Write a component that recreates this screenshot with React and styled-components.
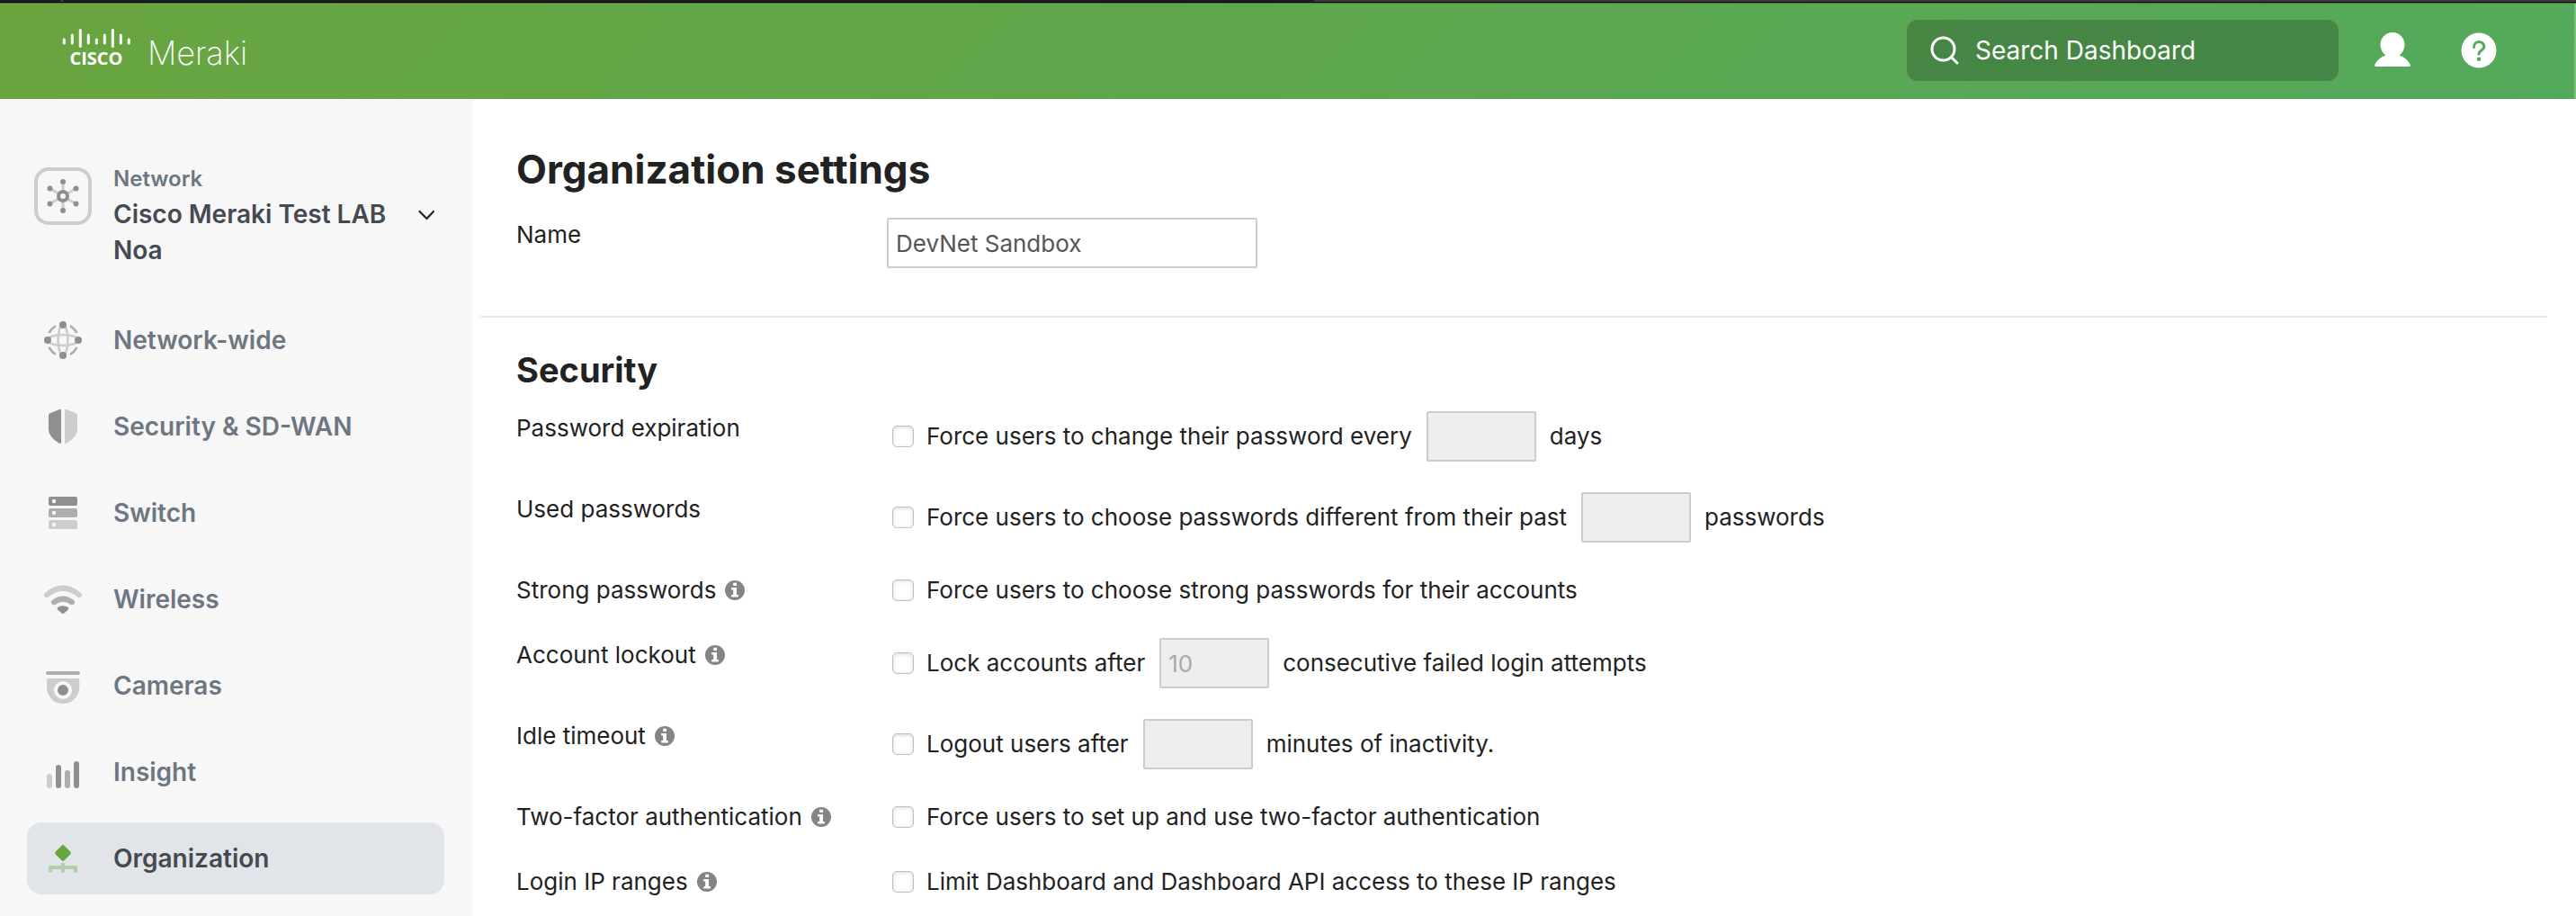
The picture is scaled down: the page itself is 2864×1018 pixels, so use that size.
import React from "react";
import styled, { createGlobalStyle } from "styled-components";

const Global = createGlobalStyle`
  *, *::before, *::after { box-sizing: border-box; }
  body { margin: 0; background: #fff; color: #222; font-family: Inter, "Liberation Sans", sans-serif; font-size: 26px; line-height: 38px; }
  h1, h2 { margin: 0; }
  button, input { font: inherit; color: inherit; margin: 0; }
  svg { display: block; flex: none; overflow: visible; }
`;

const Page = styled.div`
  display: flex;
  flex-direction: column;
  min-height: 100vh;
`;

const WindowEdge = styled.div`
  height: 3px;
  border-bottom: 1px solid #000;
  background: linear-gradient(90deg, #1c1c20 68px, #48484c 68px 70px, #1c1c20 70px 51%, #38383c 51%);
`;

const Header = styled.header`
  display: flex;
  align-items: center;
  height: 107px;
  padding: 0 88px 2px 68px;
  border-top: 1px solid #47762f;
  background: linear-gradient(135deg, #69a53f, #53a95c);
  box-shadow: inset -2px 0 rgba(255, 255, 255, 0.25);
  color: #fff;
`;

const Brand = styled.a`
  display: flex;
  align-items: flex-end;
  gap: 18px;
  margin-right: auto;
  color: inherit;
  text-decoration: none;
`;

const BrandMark = styled.span`
  display: flex;
  flex-direction: column;
  align-items: center;
  padding-bottom: 4px;
  font: 700 20px/22px "Open Sans", sans-serif;
  text-transform: uppercase;
`;

const BrandName = styled.span`
  font-size: 36px;
  line-height: 42px;
  font-weight: 200;
`;

const Search = styled.label`
  display: flex;
  align-items: center;
  gap: 18px;
  width: 480px;
  height: 68px;
  margin-right: 40px;
  padding: 0 26px;
  border-radius: 12px;
  background: rgba(0, 0, 0, 0.2);
`;

const SearchInput = styled.input`
  flex: 1;
  min-width: 0;
  padding: 0;
  border: 0;
  outline: 0;
  background: none;
  font-size: 28px;
  &::placeholder { color: #fff; opacity: 1; }
`;

const HeaderButton = styled.button`
  display: flex;
  padding: 0;
  border: 0;
  background: none;
  cursor: pointer;
  & + & { margin-left: 56px; }
`;

const Body = styled.div`
  display: flex;
  flex: 1;
`;

const Sidebar = styled.aside`
  flex: none;
  width: 526px;
  padding: 70px 32px 20px 30px;
  background: #f7f7f7;
  color: #6e7682;
  font-weight: 600;
  font-size: 28px;
  line-height: 40px;
`;

const NetworkPicker = styled.button`
  display: flex;
  align-items: flex-start;
  width: 100%;
  margin-bottom: 40px;
  padding: 0 10px 0 8px;
  border: 0;
  background: none;
  text-align: left;
  cursor: pointer;
`;

const PickerIcon = styled.span`
  margin: 6px 24px 0 0;
`;

const PickerText = styled.span`
  flex: 1;
  display: flex;
  flex-direction: column;
  color: #454a52;
`;

const PickerCaption = styled.span`
  font-size: 24px;
  line-height: 38px;
  color: #6e7682;
`;

const PickerArrow = styled.span`
  padding-top: 53px;
`;

const Nav = styled.nav`
  display: flex;
  flex-direction: column;
  gap: 16px;
`;

const NavLink = styled.a`
  display: flex;
  align-items: center;
  gap: 34px;
  height: 80px;
  padding: 0 18px;
  border-radius: 16px;
  text-decoration: none;
  color: ${(p) => (p.$active ? "#454a50" : "inherit")};
  background: ${(p) => (p.$active ? "#e1e4e9" : "none")};
`;

const Content = styled.main`
  flex: 1;
  min-width: 0;
  padding: 50px 32px 0 8px;
`;

const Section = styled.section`
  padding: 0 40px;
`;

const Title = styled.h1`
  margin-bottom: 26px;
  font-size: 44px;
  line-height: 56px;
`;

const Subtitle = styled.h2`
  margin-bottom: 22px;
  font-size: 38px;
  line-height: 48px;
`;

const Divider = styled.hr`
  height: 2px;
  margin: 53px 0 34px;
  border: 0;
  background: #e9e9e9;
`;

const Rows = styled.div`
  display: grid;
  gap: 34px;
`;

const Row = styled.div`
  display: grid;
  grid-template-columns: 412px 1fr;
  align-items: start;
`;

const Term = styled.div`
  display: flex;
  align-items: center;
  gap: 10px;
`;

const InfoButton = styled.button`
  display: flex;
  padding: 0;
  border: 0;
  background: none;
  cursor: pointer;
`;

const Field = styled.div`
  display: flex;
  align-items: center;
  padding-left: 6px;
`;

const Check = styled.input`
  appearance: none;
  flex: none;
  width: 24px;
  height: 24px;
  margin-right: 14px;
  border: 1px solid #c0c0c0;
  border-radius: 5px;
  background: #fff;
  box-shadow: inset 0 1px 4px rgba(0, 0, 0, 0.16);
  &:checked { background: #69a53f; }
`;

const TextInput = styled.input`
  height: 56px;
  padding: 0 8px;
  border: 2px solid #ccc;
  border-radius: 2px;
  background: #fff;
  color: #555;
`;

const NameInput = styled(TextInput)`
  width: 412px;
`;

const NumberInput = styled(TextInput)`
  width: 122px;
  margin: 0 15px 0 16px;
  &:disabled { background: #eee; color: #aaa; }
`;

const DARK = "#8f8f8f";
const MID = "#aeaeae";
const LIGHT = "#cdcdcd";

const barHeights = [7, 12, 21, 12, 7, 12, 21, 12, 7];

function CiscoBars() {
  return (
    <svg width="78" height="22" viewBox="0 0 78 22" fill="#fff" aria-hidden="true">
      {barHeights.map((h, i) => (
        <rect key={i} x={1.8 + i * 9} y={h === 21 ? 0 : 17.5 - h} width="3" height={h} rx="1.5" />
      ))}
    </svg>
  );
}

function HubIcon() {
  const ends = [[32, 16], [32, 48], [17.5, 23.5], [17.5, 40.5], [46.5, 23.5], [46.5, 40.5]];
  return (
    <svg width="64" height="64" viewBox="0 0 64 64" fill="none" aria-hidden="true">
      <rect x="2" y="2" width="60" height="60" rx="14" stroke={LIGHT} strokeWidth="4" />
      {ends.map(([x, y]) => <path key={`${x}-${y}`} d={`M32 32L${x} ${y}`} stroke={LIGHT} strokeWidth="3" />)}
      {ends.map(([x, y]) => <circle key={`${x}-${y}`} cx={x} cy={y} r="3" fill={DARK} />)}
      <circle cx="32" cy="32" r="5" fill="#f7f7f7" stroke={DARK} strokeWidth="4" />
    </svg>
  );
}

const navIcons = {
  network: (
    <g fill="none">
      <g stroke={LIGHT} strokeWidth="2.6">
        <ellipse cx="22" cy="22" rx="5.4" ry="17" />
        <ellipse cx="22" cy="22" rx="17" ry="6" />
      </g>
      <path d="M6.4 14Q9.4 8.9 14 6M30 6Q34.600 8.900 37.600 14M37.600 30Q34.600 35.100 30 38M14 38Q9.400 35.100 6.400 30" stroke={MID} strokeWidth="2.600" />
      <g fill={DARK}>
        <circle cx="22" cy="5" r="4" /><circle cx="22" cy="39" r="4" />
        <circle cx="5" cy="22" r="4" /><circle cx="39" cy="22" r="4" />
      </g>
    </g>
  ),
  shield: (
    <>
      <path d="M18 3Q20 2.300 20 4.300V39.500Q20 41.600 18 40.700Q6 34 6 25V9.500Q6 8.200 7.200 7.600Z" fill={DARK} />
      <path d="M26 3Q24 2.300 24 4.300V39.500Q24 41.600 26 40.700Q38 34 38 25V9.500Q38 8.200 36.800 7.600Z" fill={LIGHT} />
    </>
  ),
  stack: [[4, DARK], [17, MID], [30, LIGHT]].map(([y, fill]) => (
    <g key={y}>
      <rect x="6" y={y} width="32" height="10" rx="2" fill={fill} />
      <circle cx="12" cy={y + 5} r="2.2" fill="#f7f7f7" />
    </g>
  )),
  wifi: (
    <g fill="none" strokeLinecap="round" strokeWidth="6">
      <path d="M4 17.200Q22 2.200 40 17.200" stroke={LIGHT} />
      <path d="M12 25.200Q22 18 32 25.200" stroke={MID} />
      <path d="M16.200 33.500Q14.800 31.800 16.500 30.800Q22 27.600 27.500 30.800Q29.200 31.800 27.800 33.500L23.300 37.500Q22 38.700 20.700 37.500Z" fill={DARK} />
    </g>
  ),
  camera: (
    <>
      <rect x="3" y="6" width="38" height="4" rx="2" fill={MID} />
      <path d="M6 14H38.500Q40.300 14 40.300 16V24Q40.300 30 35.500 36Q30.500 42 22 42Q13.500 42 8.500 36Q4 30 4 24V16Q4 14 6 14Z" fill={LIGHT} />
      <circle cx="22" cy="27" r="10" fill="#f7f7f7" />
      <circle cx="22" cy="27" r="6" fill={DARK} />
    </>
  ),
  bars: [[4, 24, LIGHT], [14, 14, DARK], [24, 20, MID], [34, 10, DARK]].map(([x, y, fill]) => (
    <rect key={x} x={x} y={y} width="6" height={40 - y} rx="3" fill={fill} />
  )),
  org: (
    <>
      <rect x="15.200" y="9.200" width="13.600" height="13.600" rx="2" transform="rotate(45 22 16)" fill="#69a53f" />
      <path d="M8 36V32H36V36M22 28.500V36" fill="none" stroke="#b1cea6" strokeWidth="4" strokeLinecap="round" strokeLinejoin="round" />
    </>
  ),
};

function NavIcon({ name }) {
  return <svg width="44" height="44" viewBox="0 0 44 44" aria-hidden="true">{navIcons[name]}</svg>;
}

function InfoIcon() {
  return (
    <svg width="22" height="22" viewBox="0 0 22 22" aria-hidden="true">
      <circle cx="11" cy="11" r="11" fill="#858585" />
      <path d="M9.200 2.800H13V6H9.200ZM7.200 8H13V16H14.800V18.600H7.200V16H9.200V10.600H7.200Z" fill="#fff" />
    </svg>
  );
}

const navItems = [
  { icon: "network", label: "Network-wide" },
  { icon: "shield", label: "Security & SD-WAN" },
  { icon: "stack", label: "Switch" },
  { icon: "wifi", label: "Wireless" },
  { icon: "camera", label: "Cameras" },
  { icon: "bars", label: "Insight" },
  { icon: "org", label: "Organization", active: true },
];

const settings = [
  { id: "expiration", term: "Password expiration", text: "Force users to change their password every", after: "days", value: "" },
  { id: "used", term: "Used passwords", text: "Force users to choose passwords different from their past", after: "passwords", value: "" },
  { id: "strong", term: "Strong passwords", info: true, text: "Force users to choose strong passwords for their accounts" },
  { id: "lockout", term: "Account lockout", info: true, text: "Lock accounts after", after: "consecutive failed login attempts", value: "10" },
  { id: "idle", term: "Idle timeout", info: true, text: "Logout users after", after: "minutes of inactivity.", value: "" },
  { id: "twofactor", term: "Two-factor authentication", info: true, text: "Force users to set up and use two-factor authentication" },
  { id: "ranges", term: "Login IP ranges", info: true, text: "Limit Dashboard and Dashboard API access to these IP ranges" },
];

function SettingRow({ setting }) {
  const { id, term, info, text, after, value } = setting;
  return (
    <Row>
      <Term>
        {term}
        {info && <InfoButton type="button" aria-label={`About ${term}`}><InfoIcon /></InfoButton>}
      </Term>
      <Field>
        <Check type="checkbox" id={id} />
        <label htmlFor={id}>{text}</label>
        {after && (
          <>
            <NumberInput id={`${id}-value`} aria-label={term} disabled defaultValue={value} />
            <label htmlFor={`${id}-value`}>{after}</label>
          </>
        )}
      </Field>
    </Row>
  );
}

export default function App() {
  return (
    <Page>
      <Global />
      <WindowEdge />
      <Header>
        <Brand href="#">
          <BrandMark><CiscoBars />cisco</BrandMark>
          <BrandName>Meraki</BrandName>
        </Brand>
        <Search>
          <svg width="32" height="32" viewBox="0 0 32 32" fill="none" stroke="#fff" strokeWidth="3" strokeLinecap="round" aria-hidden="true">
            <circle cx="14.500" cy="14.500" r="12.500" />
            <path d="M23.500 23.500L30 30" />
          </svg>
          <SearchInput type="search" aria-label="Search Dashboard" placeholder="Search Dashboard" />
        </Search>
        <HeaderButton type="button" aria-label="Account">
          <svg width="40" height="40" viewBox="0 0 40 40" fill="#fff" aria-hidden="true">
            <path d="M20 0C27.500 0 33.500 6 33.500 13.500C33.500 18.500 31 23 27.500 25.500C33 27 37.500 31 39.800 36Q40.300 38 38.300 38H1.700Q-.300 38 .200 36C2.500 31 7 27 12.500 25.500C9 23 6.500 18.500 6.500 13.500C6.500 6 12.500 0 20 0Z" />
          </svg>
        </HeaderButton>
        <HeaderButton type="button" aria-label="Help">
          <svg width="40" height="40" viewBox="0 0 40 40" fill="none" aria-hidden="true">
            <circle cx="20" cy="20" r="19.500" fill="#fff" />
            <path d="M14.500 16.500C14.500 8.500 25.800 9 25.800 15.800C25.800 20 20 19.800 20 24" stroke="#53a95c" strokeWidth="3" strokeLinecap="round" />
            <circle cx="20" cy="29.700" r="2.300" fill="#53a95c" />
          </svg>
        </HeaderButton>
      </Header>
      <Body>
        <Sidebar>
          <NetworkPicker type="button">
            <PickerIcon><HubIcon /></PickerIcon>
            <PickerText>
              <PickerCaption>Network</PickerCaption>
              Cisco Meraki Test LAB Noa
            </PickerText>
            <PickerArrow>
              <svg width="20" height="12" viewBox="0 0 20 12" fill="none" stroke="#222" strokeWidth="2.200" strokeLinecap="round" strokeLinejoin="round" aria-hidden="true">
                <path d="M2.500 2L10.500 10L18 2" />
              </svg>
            </PickerArrow>
          </NetworkPicker>
          <Nav>
            {navItems.map((item) => (
              <NavLink key={item.label} href="#" $active={item.active}>
                <NavIcon name={item.icon} />
                {item.label}
              </NavLink>
            ))}
          </Nav>
        </Sidebar>
        <Content>
          <Section>
            <Title>Organization settings</Title>
            <Row>
              <label htmlFor="name">Name</label>
              <NameInput id="name" defaultValue="DevNet Sandbox" />
            </Row>
          </Section>
          <Divider />
          <Section>
            <Subtitle>Security</Subtitle>
            <Rows>
              {settings.map((setting) => <SettingRow key={setting.id} setting={setting} />)}
            </Rows>
          </Section>
        </Content>
      </Body>
    </Page>
  );
}
